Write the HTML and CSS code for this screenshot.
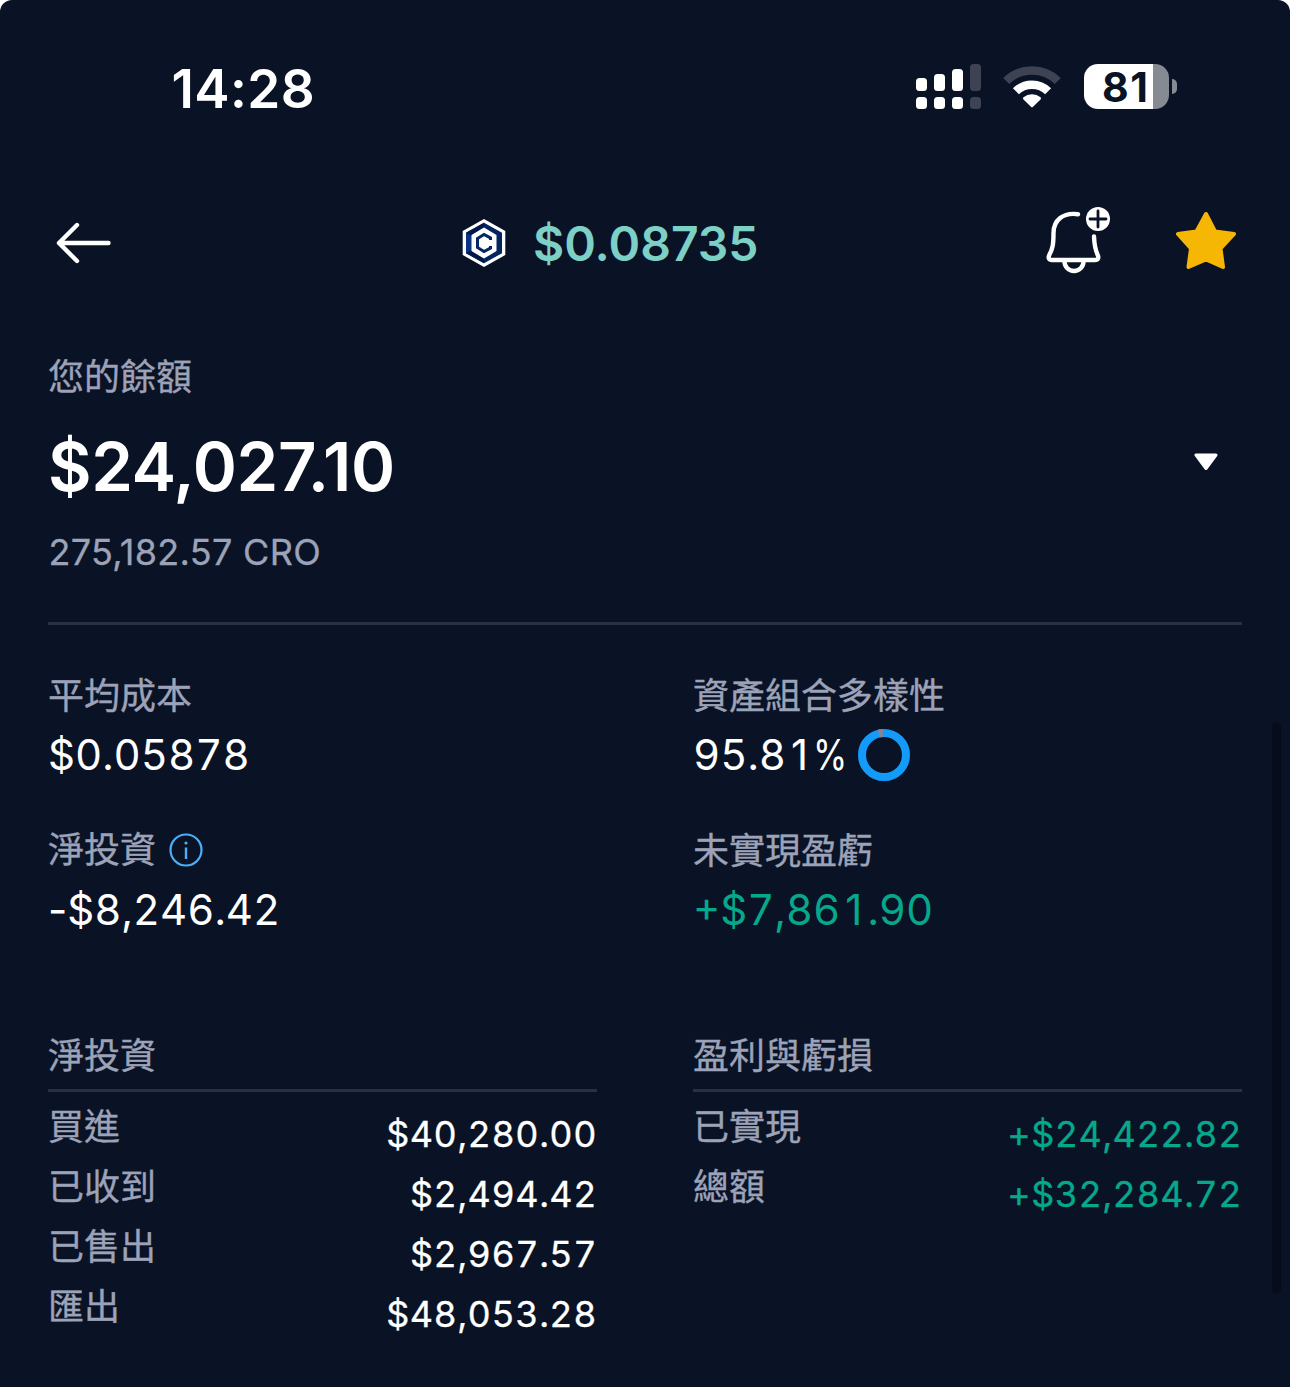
FILE: index.html
```html
<!DOCTYPE html>
<html lang="zh-Hant">
<head>
<meta charset="utf-8">
<title>CRO</title>
<link rel="stylesheet" href="styles.css">
</head>
<body>
<main class="screen">
  <div class="status">
    <span class="clock">14:28</span>
    <div class="status-icons">
      <svg class="signal" width="65" height="45" viewBox="0 0 65 45">
        <g fill="#fff">
          <rect x="0" y="14" width="11" height="13" rx="3.5"/><rect x="0" y="33" width="11" height="12" rx="3.5"/>
          <rect x="18" y="10" width="11" height="17" rx="3.5"/><rect x="18" y="33" width="11" height="12" rx="3.5"/>
          <rect x="36" y="5" width="11" height="22" rx="3.5"/><rect x="36" y="33" width="11" height="12" rx="3.5"/>
        </g>
        <g fill="#3d4353"><rect x="54" y="0" width="11" height="27" rx="3.5"/><rect x="54" y="33" width="11" height="12" rx="3.5"/></g>
      </svg>
      <svg class="wifi" width="60" height="45" viewBox="0 0 60 45">
        <path d="M4.200 17a37 37 0 0 1 51.600 0" fill="none" stroke="#3d4353" stroke-width="8.500"/>
        <path d="M13.900 27.200a23 23 0 0 1 32.200 0" fill="none" stroke="#fff" stroke-width="8.500"/>
        <path d="M22.500 34.400a11.600 11.600 0 0 1 15 0L30 41.700z" fill="#fff" stroke="#fff" stroke-width="3" stroke-linejoin="round"/>
      </svg>
      <div class="battery"><span>81</span></div>
      <div class="battery-cap"></div>
    </div>
  </div>

  <header class="header">
    <svg width="58" height="44" viewBox="0 0 58 44" fill="none" stroke="#fff" stroke-width="4.4" stroke-linecap="round" stroke-linejoin="round"><path d="M54.5 22H5M23 4 5 22l18 18"/></svg>
    <div class="ticker">
      <svg width="44" height="50" viewBox="0 0 44 50">
        <path d="M22 1 43.3 13v24L22 49 .7 37V13z" fill="#fff"/>
        <path d="M22 4.800 40 14.800v20.400L22 45.200 4 35.200V14.800z" fill="#03245f"/>
        <path d="M22 4.800V13L11 19 4 14.800zM22 45.200V37L11 31 4 35.200z" fill="#02184a"/>
        <path d="M4 14.800 11 19v12L4 35.200z" fill="#0b3384"/>
        <path d="M22 9.500 34.500 16.900v16.200L22 40.500 9.500 33.100V16.900z" fill="#fff"/>
        <path d="M28.500 22v-2L22 16.500 15.500 20.500v9l6.500 4 6.500-3.500v-2" fill="none" stroke="#052666" stroke-width="3"/>
      </svg>
      <span class="price">$0.08735</span>
    </div>
    <div class="actions">
      <svg class="bell" width="66" height="70" viewBox="0 0 66 70" fill="none">
        <path d="M33 10.200C18 8 8.500 16.500 8.500 29c0 12-1 16-4 21.500-1.800 3.500-.5 5.500 2.500 5.500h43c3 0 4.200-2 2.500-5.500C50 45 49.300 40 49 32.500" stroke="#fff" stroke-width="4.400" stroke-linecap="round"/>
        <path d="M19.500 57.500a9.300 9.300 0 0 0 19 0" stroke="#fff" stroke-width="4.400"/>
        <circle cx="53" cy="15" r="12" fill="#fff"/>
        <path d="M53 7v16M45 15h16" stroke="#0a1325" stroke-width="2.800" stroke-linecap="round"/>
      </svg>
      <svg class="star" width="62" height="60" viewBox="0 0 62 60"><path d="M31 3 40 20.500 59 23 45.500 37.500 48 56 31 48.500 13.500 56 16 37.500 3 23 21.500 20.500z" fill="#f6b604" stroke="#f6b604" stroke-width="4" stroke-linejoin="round"/></svg>
    </div>
  </header>

  <section class="balance">
    <div class="label">您的餘額</div>
    <div class="amount-row">
      <span class="amount">$24,027.10</span>
      <svg width="24" height="18" viewBox="0 0 24 18"><path d="M2 2h20L12 15.500z" fill="#fff" stroke="#fff" stroke-width="3" stroke-linejoin="round"/></svg>
    </div>
    <div class="units">275,182.57 CRO</div>
  </section>

  <section class="stats">
    <div class="stat"><div class="label">平均成本</div><div class="value">$0.05878</div></div>
    <div class="stat"><div class="label">資產組合多樣性</div>
      <div class="value share"><span>95.8<span class="one">1</span><span class="percent">%</span></span>
        <svg width="52" height="52" viewBox="0 0 52 52" fill="none" stroke-width="8"><circle cx="26" cy="26" r="22" stroke="#149bfa"/><path d="M20.800 4.600A22 22 0 0 1 25 4" stroke="#84859b"/></svg>
      </div>
    </div>
    <div class="stat"><div class="label with-icon"><span>淨投資</span>
      <svg width="34" height="34" viewBox="0 0 34 34" fill="none" stroke="#4bb0fb"><circle cx="17" cy="17" r="15.500" stroke-width="2.200"/><path d="M17 14.500V26" stroke-width="2.400"/><circle cx="17" cy="10" r="1.600" fill="#4bb0fb" stroke="none"/></svg></div>
      <div class="value"><span class="sign">-</span>$8,246.42</div></div>
    <div class="stat"><div class="label">未實現盈虧</div><div class="value gain">+$7,86<span class="one">1</span>.90</div></div>
  </section>

  <section class="tables">
    <div class="table">
      <h2 class="label">淨投資</h2>
      <div class="row"><span class="label">買進</span><span class="num">$40,280.00</span></div>
      <div class="row"><span class="label">已收到</span><span class="num">$2,494.42</span></div>
      <div class="row"><span class="label">已售出</span><span class="num">$2,967.57</span></div>
      <div class="row"><span class="label">匯出</span><span class="num">$48,053.28</span></div>
    </div>
    <div class="table">
      <h2 class="label">盈利與虧損</h2>
      <div class="row"><span class="label">已實現</span><span class="num gain">+$24,422.82</span></div>
      <div class="row"><span class="label">總額</span><span class="num gain">+$32,284.72</span></div>
    </div>
  </section>
  <div class="scrollbar"></div>
</main>
</body>
</html>
```
FILE: styles.css
```css
* { box-sizing: border-box; }
body { margin: 0; background: #fff; font-family: Inter, "Noto Sans CJK TC", sans-serif; }
svg { display: block; flex: none; }
.screen { position: relative; height: 1387px; padding: 0 48px; background: #0a1325; color: #fff; border-radius: 12px 12px 0 0; overflow: hidden; }
.status { display: flex; justify-content: space-between; height: 176px; margin-right: 65px; }
.clock { padding-left: 123.500px; font-size: 53px; font-weight: 600; line-height: 178px; letter-spacing: 0.400px; }
.status-icons { display: flex; align-items: flex-start; padding-top: 64px; }
.wifi { margin: 0 22px 0 21.500px; }
.battery { width: 85px; height: 45px; border-radius: 14px; background: linear-gradient(to right, #fff 69px, #868a93 69px); color: #0a1325; font-size: 41px; font-weight: 700; line-height: 46px; letter-spacing: 1.500px; padding-left: 18px; }
.battery-cap { width: 5px; height: 15px; margin: 15px 0 0 3px; border-radius: 0 5px 5px 0; background: #868a93; }
.header { display: grid; grid-template-columns: 408px auto 1fr; align-items: center; height: 134px; padding-left: 6px; }
.ticker { display: flex; align-items: center; gap: 27px; }
.price { color: #7dd0c6; font-size: 48px; font-weight: 600; }
.actions { display: flex; justify-content: flex-end; align-items: center; gap: 64px; padding-right: 5px; }
.bell { margin-bottom: 8px; }
.star { margin-bottom: 4px; }
.label { margin: 0; padding-top: 1px; color: #9ca2b8; font-size: 36px; font-weight: 400; -webkit-text-stroke: 0.350px currentColor; line-height: 49px; height: 48px; }
.balance { height: 315px; padding-top: 42px; border-bottom: 3px solid #2a3040; }
.amount-row { display: flex; align-items: center; justify-content: space-between; height: 92px; margin: 20px 0 16px; padding-right: 24px; }
.amount-row svg { margin-bottom: 8px; }
.amount { font-size: 67px; font-weight: 600; letter-spacing: -0.350px; }
.units { color: #9ca2b8; font-size: 36px; -webkit-text-stroke: 0.300px currentColor; line-height: 48px; letter-spacing: 0.300px; padding-left: 0.500px; }
.stats { display: grid; grid-template-columns: 1fr 1fr; column-gap: 96px; row-gap: 45px; padding-top: 46px; }
.value { margin-top: 10px; font-size: 42px; line-height: 52px; font-variant-numeric: tabular-nums; }
.sign, .one { font-variant-numeric: proportional-nums; }
.one { display: inline-block; width: 27.300px; text-align: center; }
.percent { display: inline-block; width: 29px; font-variant-numeric: proportional-nums; transform: scaleX(0.83); transform-origin: left; }
.share { display: flex; gap: 16px; }
.with-icon { display: flex; align-items: center; gap: 13px; }
.with-icon svg { margin-top: -1px; }
.gain { color: #06a88b; }
.tables { display: grid; grid-template-columns: 1fr 1fr; column-gap: 96px; padding-top: 95px; }
.table h2 { height: 61px; margin-bottom: 4px; border-bottom: 3px solid #2a3040; }
.row { display: flex; justify-content: space-between; height: 60px; }
.row .label { line-height: 61px; }
.num { padding-top: 8px; font-size: 36px; -webkit-text-stroke: 0.300px currentColor; line-height: 60px; letter-spacing: 0.500px; font-variant-numeric: tabular-nums; }
.scrollbar { position: absolute; left: 1272px; top: 722px; width: 9px; height: 572px; border-radius: 5px; background: #060c19; }
```
